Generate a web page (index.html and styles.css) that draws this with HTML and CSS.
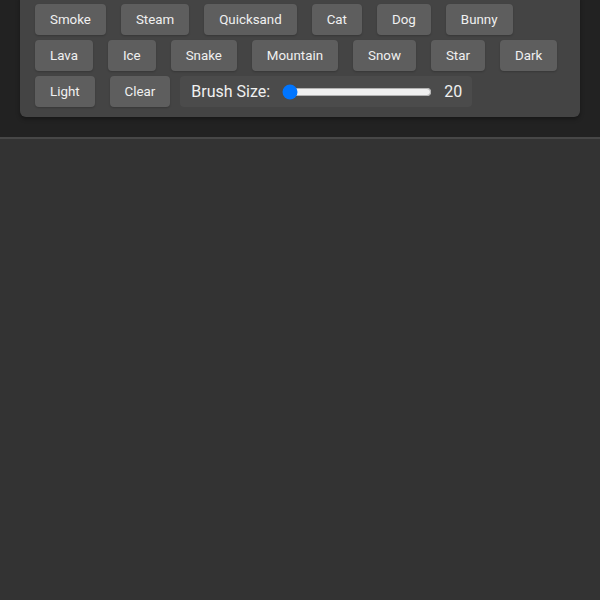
FILE: index.html
```html
<!DOCTYPE html>
<html>
<head>
<meta charset="utf-8">
<link rel="stylesheet" href="styles.css">
</head>
<body>
<header class="header">
  <div class="panel">
    <button class="btn">Smoke</button>
    <button class="btn">Steam</button>
    <button class="btn">Quicksand</button>
    <button class="btn">Cat</button>
    <button class="btn">Dog</button>
    <button class="btn">Bunny</button>
    <button class="btn">Lava</button>
    <button class="btn">Ice</button>
    <button class="btn">Snake</button>
    <button class="btn">Mountain</button>
    <button class="btn">Snow</button>
    <button class="btn">Star</button>
    <button class="btn">Dark</button>
    <button class="btn">Light</button>
    <button class="btn">Clear</button>
    <div class="brush">
      <label class="brush-label" for="size">Brush Size:</label>
      <input class="brush-range" id="size" type="range" min="20" max="200" value="20">
      <span class="brush-value">20</span>
    </div>
  </div>
</header>
<main class="canvas-area"></main>
</body>
</html>
```
FILE: styles.css
```css
html, body {
  margin: 0;
  padding: 0;
  background: #333333;
  font-family: Roboto, "Noto Sans", sans-serif;
  height: 100%;
  overflow: hidden;
}

.header {
  background: #222222;
  padding: 20px;
  margin-top: -26px;
  border-bottom: 2px solid #474747;
}

.panel {
  background: #444444;
  border-radius: 6px;
  padding: 10px;
  display: flex;
  flex-wrap: wrap;
  gap: 5px;
  box-shadow: 0 2px 4px rgba(0, 0, 0, 0.35);
}

.btn {
  margin: 0 5px;
  background: #5e5e5e;
  color: #f0f0f0;
  border: none;
  border-radius: 4px;
  padding: 7px 15px;
  font-family: Roboto, "Noto Sans", sans-serif;
  font-size: 13.33px;
  line-height: 17px;
  box-shadow: 0 1px 2px rgba(0, 0, 0, 0.2);
}

.brush {
  display: flex;
  align-items: center;
  gap: 10px;
  height: 31px;
  padding: 0 10px 0 11px;
  background: #4b4b4b;
  border-radius: 4px;
  color: #f0f0f0;
  font-size: 16px;
}

.brush-range {
  width: 150px;
  margin: 0 2px;
}
```
